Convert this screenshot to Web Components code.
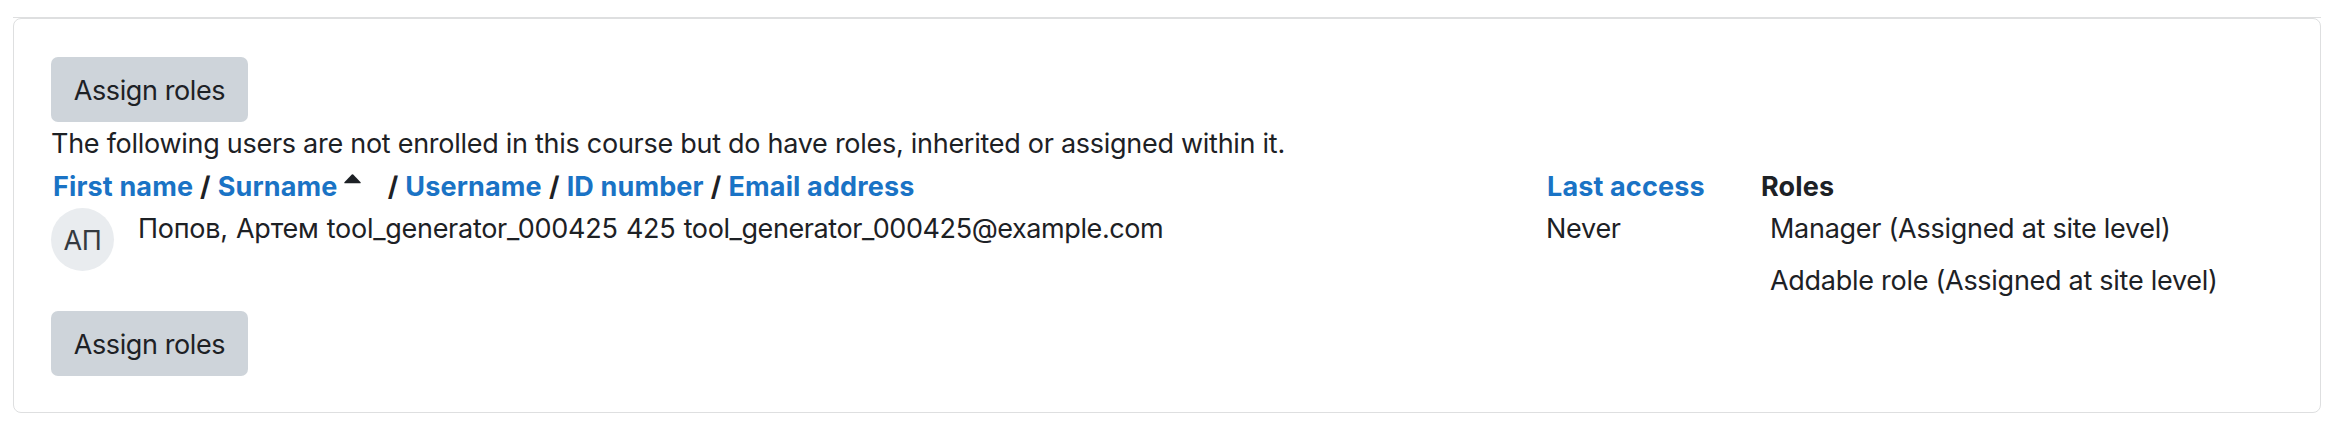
<!DOCTYPE html>
<html lang="en">
<head>
<meta charset="utf-8">
<title>Assign roles</title>
<style>
  body {
    margin: 0;
    background: #fff;
    color: #1d2125;
    font: 27px/43px Inter, "Noto Sans", sans-serif;
    letter-spacing: -0.275px;
  }
</style>
</head>
<body>
<page-card>
  <assign-button>Assign roles</assign-button>
  <p>The following users are not enrolled in this course but do have roles, inherited or assigned within it.</p>
  <other-users></other-users>
  <assign-button>Assign roles</assign-button>
</page-card>

<script>
const cardTemplate = document.createElement("template");
cardTemplate.innerHTML = `
<style>
  :host {
    display: block;
    box-sizing: border-box;
    width: 2308px;
    height: 396px;
    margin: 17px 0 0 13px;
    border-top: 1px solid #dedfe0;
  }
  .card {
    box-sizing: border-box;
    height: 395px;
    padding: 38px 37px;
    border: 1px solid #dedfe0;
    border-radius: 8px;
  }
  ::slotted(p) {
    height: 43px;
    margin: 0;
  }
</style>
<div class="card"><slot></slot></div>`;

class PageCard extends HTMLElement {
  constructor() {
    super();
    this.attachShadow({ mode: "open" });
    this.shadowRoot.appendChild(cardTemplate.content.cloneNode(true));
  }
}

const buttonTemplate = document.createElement("template");
buttonTemplate.innerHTML = `
<style>
  :host {
    display: block;
    height: 65px;
  }
  button {
    width: 197px;
    height: 65px;
    padding: 2px 0 0;
    border: 0;
    border-radius: 7px;
    background: #ced4da;
    color: #1d2125;
    font: inherit;
    letter-spacing: -0.4px;
  }
</style>
<button type="button"><slot></slot></button>`;

class AssignButton extends HTMLElement {
  constructor() {
    super();
    this.attachShadow({ mode: "open" });
    this.shadowRoot.appendChild(buttonTemplate.content.cloneNode(true));
  }
}

// Initials shown when the user has no picture
class UserInitials extends HTMLElement {
  constructor() {
    super();
    this.attachShadow({ mode: "open" });
    this.shadowRoot.innerHTML = `
<style>
  :host {
    display: flex;
    box-sizing: border-box;
    align-items: center;
    justify-content: center;
    width: 63px;
    height: 63px;
    padding-top: 2px;
    border-radius: 50%;
    background: #e9ecef;
    color: #343a40;
  }
</style>
<slot></slot>`;
  }
}

const tableTemplate = document.createElement("template");
tableTemplate.innerHTML = `
<style>
  :host {
    display: block;
    height: 146px;
  }
  .row {
    display: grid;
    grid-template-columns: 1495px 215px 1fr;
    line-height: 42px;
  }
  .head {
    height: 43px;
    padding-left: 2px;
    grid-template-columns: 1494px 214px 1fr;
    line-height: 43px;
    font-weight: 700;
    white-space: nowrap;
    letter-spacing: 0.14px;
  }
  .head > div {
    display: flex;
  }
  a {
    color: #1a73c5;
    text-decoration: none;
  }
  .sep {
    width: 24.8px;
    text-align: center;
  }
  .sep:first-of-type {
    width: 24.5px;
  }
  svg {
    width: 17px;
    height: 10px;
    margin: 9px 20px 0 6px;
  }
  .user {
    display: flex;
  }
  .user p {
    margin: 0 0 0 24px;
    word-spacing: 1px;
  }
  .email {
    letter-spacing: -0.41px;
  }
  ul {
    margin: 0;
    padding: 0 0 0 9px;
    list-style: none;
  }
  li {
    height: 52px;
  }
</style>
<div class="row head">
  <div>
    <a>First name</a><span class="sep">/</span><a>Surname</a>
    <svg viewBox="0 0 17 10"><path d="M7.8.4Q8.5-.1 9.2.4L16.6 8.2Q17 9.3 16 9.3H1Q0 9.3.4 8.2Z" fill="#1d2125"/></svg>
    <span class="sep">/</span><a>Username</a><span class="sep">/</span><a>ID number</a><span class="sep">/</span><a>Email address</a>
  </div>
  <div><a>Last access</a></div>
  <div>Roles</div>
</div>
<div class="row">
  <div class="user">
    <user-initials>АП</user-initials>
    <p>Попов, Артем tool_generator_000425 425 <span class="email">tool_generator_000425@example.com</span></p>
  </div>
  <div>Never</div>
  <ul>
    <li>Manager (Assigned at site level)</li>
    <li>Addable role (Assigned at site level)</li>
  </ul>
</div>`;

class OtherUsers extends HTMLElement {
  constructor() {
    super();
    this.attachShadow({ mode: "open" });
    this.shadowRoot.appendChild(tableTemplate.content.cloneNode(true));
  }
}

customElements.define("page-card", PageCard);
customElements.define("assign-button", AssignButton);
customElements.define("user-initials", UserInitials);
customElements.define("other-users", OtherUsers);
</script>
</body>
</html>
